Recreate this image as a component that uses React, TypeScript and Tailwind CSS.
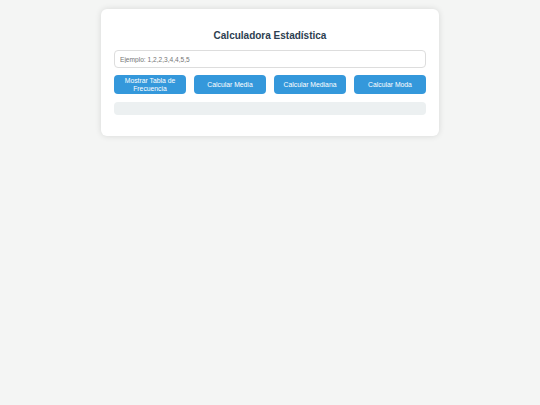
export default function App() {
  return (
    <div className="min-h-[405px] bg-[#f4f5f4] pt-[9px] font-['Liberation_Sans',Arial,sans-serif]">
      <div className="mx-auto w-[338px] rounded-[6px] bg-white px-[13px] pt-[20px] pb-[21px] shadow-[0_0_6px_rgba(0,0,0,0.12)]">
        <h2 className="mb-[7px] text-center text-[10px] leading-[14px] font-bold text-[#2c3e50]">Calculadora Estadística</h2>
        <input
          type="text"
          placeholder="Ejemplo: 1,2,2,3,4,4,5,5"
          className="mb-[7px] block h-[18px] w-full rounded-[4px] border border-[#dddddd] px-[5px] text-[6.6px] text-[#333] placeholder:text-[#757575] outline-none"
        />
        <div className="grid grid-cols-4 gap-[8px]">
          {["Mostrar Tabla de Frecuencia", "Calcular Media", "Calcular Mediana", "Calcular Moda"].map((label) => (
            <button
              key={label}
              className="flex h-[19px] items-center justify-center rounded-[4px] bg-[#3498db] px-[6px] text-center text-[6.8px] leading-[8px] text-white"
            >
              {label}
            </button>
          ))}
        </div>
        <div className="mt-[8px] h-[13px] rounded-[4px] bg-[#ecf0f1]" />
      </div>
    </div>
  );
}
